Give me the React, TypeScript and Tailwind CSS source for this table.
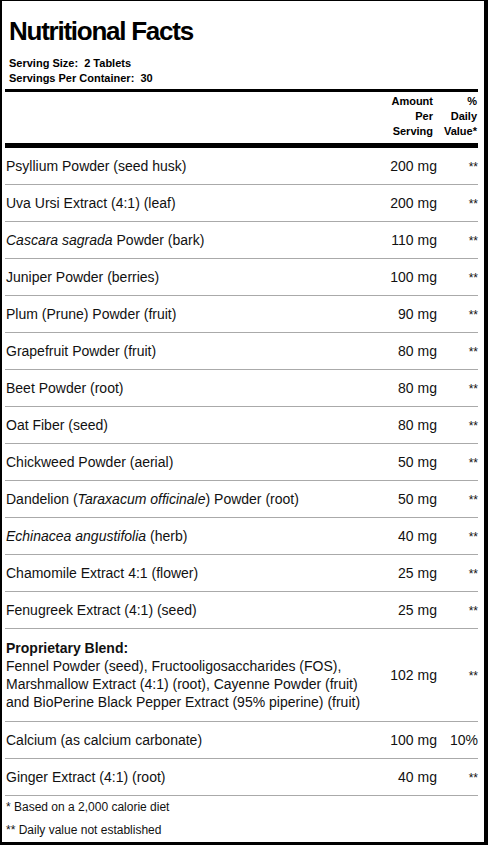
// Supplement facts panel: a list of ingredients described as data and rendered as rows.
type Row = {
  name: React.ReactNode;
  amount: string;
  dv?: string;
};

const ROWS: Row[] = [
  { name: "Psyllium Powder (seed husk)", amount: "200 mg" },
  { name: "Uva Ursi Extract (4:1) (leaf)", amount: "200 mg" },
  { name: <><i>Cascara sagrada</i> Powder (bark)</>, amount: "110 mg" },
  { name: "Juniper Powder (berries)", amount: "100 mg" },
  { name: "Plum (Prune) Powder (fruit)", amount: "90 mg" },
  { name: "Grapefruit Powder (fruit)", amount: "80 mg" },
  { name: "Beet Powder (root)", amount: "80 mg" },
  { name: "Oat Fiber (seed)", amount: "80 mg" },
  { name: "Chickweed Powder (aerial)", amount: "50 mg" },
  { name: <>Dandelion (<i>Taraxacum officinale</i>) Powder (root)</>, amount: "50 mg" },
  { name: <><i>Echinacea angustifolia</i> (herb)</>, amount: "40 mg" },
  { name: "Chamomile Extract 4:1 (flower)", amount: "25 mg" },
  { name: "Fenugreek Extract (4:1) (seed)", amount: "25 mg" },
];

const TAIL: Row[] = [
  { name: "Calcium (as calcium carbonate)", amount: "100 mg", dv: "10%" },
  { name: "Ginger Extract (4:1) (root)", amount: "40 mg" },
];

function Dv({ value }: { value?: string }) {
  return (
    <div className="w-[41px] shrink-0 text-right">
      {value ?? <span className="text-[12px]">**</span>}
    </div>
  );
}

function IngredientRow({ row }: { row: Row }) {
  return (
    <div className="flex h-[37px] items-center border-b border-[#aaaaaa] text-[14px] text-[#111]">
      <div className="flex-1 pl-[1px]">{row.name}</div>
      <div className="w-[80px] shrink-0 text-right">{row.amount}</div>
      <Dv value={row.dv} />
    </div>
  );
}

export default function App() {
  return (
    <div className="h-[845px] w-[488px] border-t border-r-4 border-b-[3px] border-l-2 border-black bg-white pr-[6px] pl-[3px] font-['Liberation_Sans',Arial,sans-serif] text-black">
      <div className="pt-[14px] pl-[4px] text-[26px] leading-[32px] font-bold tracking-[-1.25px]">
        Nutritional Facts
      </div>
      <div className="mt-[9px] pl-[4px] text-[11px] leading-[15px] font-bold">
        <div>Serving Size:&nbsp; 2 Tablets</div>
        <div>Servings Per Container:&nbsp; 30</div>
      </div>
      <div className="mt-[3px] h-[3px] bg-black" />

      <div className="flex pt-[2px] pb-[4px] text-[11px] leading-[15px] font-bold">
        <div className="flex-1" />
        <div className="w-[80px] shrink-0 pr-[4px] text-right">
          Amount
          <br />
          Per
          <br />
          Serving
        </div>
        <div className="w-[41px] shrink-0 pr-[1px] text-right">
          %
          <br />
          Daily
          <br />
          Value*
        </div>
      </div>
      <div className="h-[5px] bg-black" />

      {ROWS.map((r, i) => (
        <IngredientRow key={i} row={r} />
      ))}

      <div className="flex items-center border-b border-[#aaaaaa] py-[10px] text-[14px] leading-[18px] text-[#111]">
        <div className="flex-1 pl-[1px]">
          <div className="font-bold">Proprietary Blend:</div>
          Fennel Powder (seed), Fructooligosaccharides (FOS),
          <br />
          Marshmallow Extract (4:1) (root), Cayenne Powder (fruit)
          <br />
          and BioPerine Black Pepper Extract (95% piperine) (fruit)
        </div>
        <div className="w-[60px] shrink-0 text-right">102 mg</div>
        <Dv />
      </div>

      {TAIL.map((r, i) => (
        <IngredientRow key={i} row={r} />
      ))}

      <div className="pl-[1px] text-[12px] leading-[23px] text-[#111]">
        <div>* Based on a 2,000 calorie diet</div>
        <div>** Daily value not established</div>
      </div>
    </div>
  );
}
